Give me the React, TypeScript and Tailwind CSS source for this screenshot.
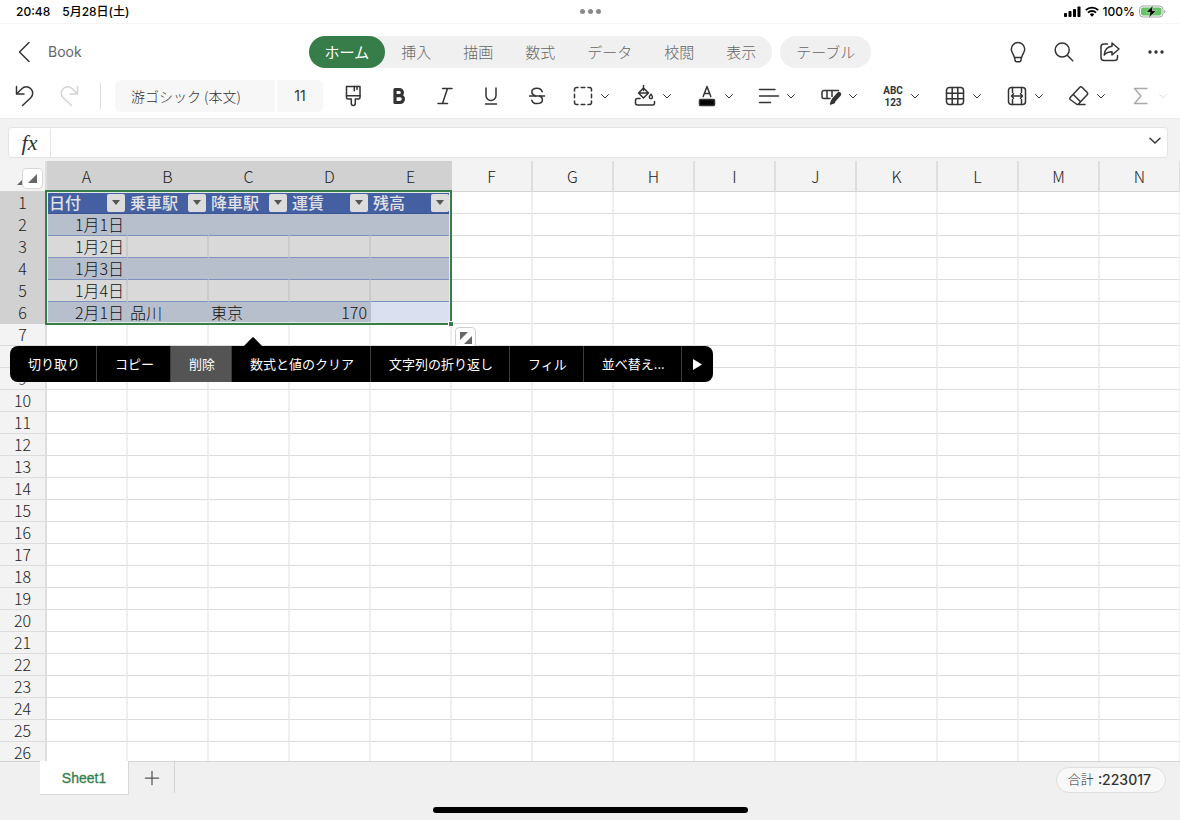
import React from 'react';

type IconProps = { children: React.ReactNode; className?: string };

function Icon({ children, className = 'h-6 w-6' }: IconProps) {
  return (
    <svg
      viewBox="0 0 24 24"
      className={`shrink-0 ${className}`}
      fill="none"
      stroke="currentColor"
      strokeWidth="1.5"
      strokeLinecap="round"
      strokeLinejoin="round"
      aria-hidden="true"
    >
      {children}
    </svg>
  );
}

const ribbonTabs = ['ホーム', '挿入', '描画', '数式', 'データ', '校閲', '表示'];

const formatTools = [
  {
    label: '書式のコピー',
    icon: (
      <>
        <path d="M5.500 2.500h13.500v11a1.500 1.500 0 0 1-1.500 1.500h-3.200v4.500a2 2 0 0 1-4 0V15H7a1.500 1.500 0 0 1-1.500-1.500z" />
        <path d="M5.500 11.700H19M13.300 2.500v4.300M16 2.500v3" />
      </>
    ),
  },
  {
    label: '太字',
    icon: <path strokeWidth="3.200" d="M8 5.500h4.300a3.100 3.100 0 0 1 0 6.200H8zM8 11.700h5a3.400 3.400 0 0 1 0 6.800H8z" />,
  },
  { label: '斜体', icon: <path d="M9.500 4.500H19M5 19.500h9.500M14.500 4.500 9.500 19.500" /> },
  { label: '下線', icon: <path d="M7 4v7.500a5 5 0 0 0 10 0V4M6.500 20h11" /> },
  {
    label: '取り消し線',
    icon: (
      <>
        <path d="M17.200 7.700C16.500 5.500 14.500 4.200 12 4.200c-3 0-5.200 1.600-5.200 3.900 0 1.800 1.300 3 3.700 3.900M6.800 16.200c.6 2 2.600 3.400 5.300 3.400 3.200 0 5.300-1.500 5.300-3.900 0-1.700-1-2.900-2.800-3.700" />
        <path d="M4.500 12h15" />
      </>
    ),
  },
];

const menuTools = [
  {
    label: '罫線',
    icon: (
      <path d="M3.500 7V5.500a2 2 0 0 1 2-2H7M17 3.500h1.500a2 2 0 0 1 2 2V7M20.500 17v1.500a2 2 0 0 1-2 2H17M7 20.500H5.500a2 2 0 0 1-2-2V17M10.200 3.500h3.600M10.200 20.500h3.600M3.500 10.200v3.600M20.500 10.200v3.600" />
    ),
  },
  {
    label: '塗りつぶしの色',
    icon: (
      <>
        <path d="M10.500 1.500v5M5.500 9 10.500 4l5 5-5 5zM5.500 9h10M18 10.200c1 1.400 1.500 2 1.500 2.900a1.600 1.600 0 0 1-3.200 0c0-.9.700-1.500 1.700-2.900z" />
        <path d="M7 14.500H4.500a2 2 0 0 0-2 2V19a2 2 0 0 0 2 2h15a2 2 0 0 0 2-2v-1.500" />
      </>
    ),
  },
  {
    label: 'フォントの色',
    icon: (
      <>
        <path d="M8.200 12.500 12 2.500l3.800 10M9.500 9.500h5" />
        <rect x="4.500" y="15.500" width="15" height="6" rx="1" fill="#000" />
      </>
    ),
  },
  { label: '配置', icon: <path d="M2.500 5.500h15.500M2.500 12h19M2.500 18.500h11" /> },
  {
    label: 'セルのスタイル',
    icon: (
      <>
        <path d="M11 14.500H5a2 2 0 0 1-2-2V8.500a2 2 0 0 1 2-2h14.500M8 6.500v8M13 6.500v6" />
        <path d="M20 10.200 14.800 16" strokeWidth="4.500" />
        <path d="M12.800 16.500 11.500 20l4-1.500z" fill="currentColor" />
      </>
    ),
  },
  {
    label: '表示形式',
    icon: (
      <g
        fill="currentColor"
        stroke="none"
        className="font-[Roboto,sans-serif] text-[10px] font-bold"
        textAnchor="middle"
      >
        <text x="12" y="10">ABC</text>
        <text x="12" y="22">123</text>
      </g>
    ),
  },
  {
    label: '表',
    icon: (
      <>
        <rect x="3.500" y="3.500" width="17" height="17" rx="3" />
        <path d="M3.500 9.200h17M3.500 14.800h17M9.200 3.500v17M14.800 3.500v17" />
      </>
    ),
  },
  {
    label: '挿入と削除',
    icon: (
      <>
        <rect x="3.500" y="3.500" width="17" height="17" rx="3" />
        <path d="M7.500 3.500v5M16.500 3.500v5M7.500 15.500v5M16.500 15.500v5M6.500 12h11M8.500 9.800 6.500 12l2 2.200M15.500 9.800l2 2.200-2 2.200" />
      </>
    ),
  },
  {
    label: 'クリア',
    icon: (
      <path d="m3.200 13.500 9.600-10.200a1.500 1.500 0 0 1 2.200 0l5.200 5.200a1.500 1.500 0 0 1 0 2.200L11.500 20a1.500 1.500 0 0 1-2.200 0l-6.100-4.500a1.500 1.500 0 0 1 0-2zM6.300 10.500l7.200 7.200M10.500 20.500H18" />
    ),
  },
  {
    label: 'オート SUM',
    faded: true,
    icon: <path strokeLinecap="butt" d="M18.500 4.500H5.500L12 12l-6.500 7.500h13" />,
  },
];

const columns = ['A', 'B', 'C', 'D', 'E', 'F', 'G', 'H', 'I', 'J', 'K', 'L', 'M', 'N'];
const tableColumns = 5;
const headings = ['日付', '乗車駅', '降車駅', '運賃', '残高'];
const records = [
  ['1月1日'],
  ['1月2日'],
  ['1月3日'],
  ['1月4日'],
  ['2月1日', '品川', '東京', '170'],
];

const contextItems = [
  '切り取り',
  'コピー',
  '削除',
  '数式と値のクリア',
  '文字列の折り返し',
  'フィル',
  '並べ替え...',
];

function StatusBar() {
  return (
    <div className="grid h-6 shrink-0 grid-cols-[1fr_auto_1fr] items-center border-b border-[#f6f6f6] px-4 font-[Inter,'Noto_Sans_CJK_JP',sans-serif] text-xs font-medium text-black">
      <div className="flex gap-3">
        <span>20:48</span>
        <span>5月28日(土)</span>
      </div>
      <div className="flex gap-[3px]">
        <span className="h-[5px] w-[5px] rounded-full bg-[#8a8a8a]" />
        <span className="h-[5px] w-[5px] rounded-full bg-[#8a8a8a]" />
        <span className="h-[5px] w-[5px] rounded-full bg-[#8a8a8a]" />
      </div>
      <div className="flex items-center justify-end gap-1">
        <svg viewBox="0 0 17 11" className="h-[11px] w-[17px]" aria-hidden="true">
          <rect x="0" y="7" width="3" height="4" rx="0.8" />
          <rect x="4.500" y="5" width="3" height="6" rx="0.8" />
          <rect x="9" y="3" width="3" height="8" rx="0.8" />
          <rect x="13.500" y="0.500" width="3" height="10.500" rx="0.8" />
        </svg>
        <svg viewBox="0 0 14 11" className="h-[11px] w-[14px]" fill="none" stroke="#000" aria-hidden="true">
          <path strokeWidth="1.900" d="M.8 4.200a8.800 8.800 0 0 1 12.400 0M3 6.600a5.700 5.700 0 0 1 8 0" />
          <path fill="#000" stroke="none" d="M4.800 8.400a3.100 3.100 0 0 1 4.400 0L7 10.700z" />
        </svg>
        <span>100%</span>
        <svg viewBox="0 0 27 13" className="-mr-0.5 h-[13px] w-[27px]" aria-hidden="true">
          <rect x="0.500" y="1" width="23.500" height="11" rx="3.500" fill="none" stroke="#a5a5a5" />
          <rect x="2" y="2.500" width="20.500" height="8" rx="2" fill="#65c466" />
          <path d="M25.200 4.800c1.600.6 1.600 2.800 0 3.400z" fill="#a5a5a5" />
          <path d="M14 .5 7.200 7.300h4l-1.500 5.400 7.700-7h-4.200z" stroke="#fff" strokeWidth="0.500" />
        </svg>
      </div>
    </div>
  );
}

function TitleBar() {
  return (
    <header className="grid h-14 shrink-0 grid-cols-[1fr_auto_1fr] items-center text-[15px] text-[#666]">
      <div className="flex items-center pl-3">
        <button aria-label="戻る" className="text-[#333]">
          <Icon>
            <path d="M17 2.500 7.500 12l9.500 9.500" />
          </Icon>
        </button>
        <span className="ml-3 font-[Inter,sans-serif] text-sm">Book</span>
      </div>
      <nav className="flex gap-2 font-light">
        <div className="flex rounded-full bg-[#f0f0f0]">
          {ribbonTabs.map((tab, i) => (
            <button
              key={tab}
              className={`h-8 rounded-full px-4 ${i === 0 ? 'bg-[#377d49] font-normal text-white' : ''}`}
            >
              {tab}
            </button>
          ))}
        </div>
        <button className="h-8 rounded-full bg-[#f0f0f0] px-4">テーブル</button>
      </nav>
      <div className="flex justify-end pr-px text-[#333]">
        <button aria-label="ヒント" className="flex w-[46px] justify-center">
          <Icon>
            <path d="M12 2.500a6.700 6.700 0 0 0-6.700 6.700c0 3 2.200 4.500 3.100 8.300h7.200c.9-3.800 3.100-5.300 3.100-8.300A6.700 6.700 0 0 0 12 2.500zM8.600 17.500l.5 3a1.500 1.500 0 0 0 1.400 1.200h3a1.500 1.500 0 0 0 1.400-1.200l.5-3" />
          </Icon>
        </button>
        <button aria-label="検索" className="flex w-[46px] justify-center">
          <Icon>
            <circle cx="10.200" cy="10" r="7" />
            <path d="m15.200 15.200 5.500 5.500" />
          </Icon>
        </button>
        <button aria-label="共有" className="flex w-[46px] justify-center">
          <Icon>
            <path d="M9.500 4H6a3 3 0 0 0-3 3v10.500a3 3 0 0 0 3 3h10.500a3 3 0 0 0 3-3v-2" />
            <path d="M14 3 21 9l-7 6v-3.300c-3.500 0-6 1-7.800 3.300.5-5 3.300-8.300 7.800-8.700z" />
          </Icon>
        </button>
        <button aria-label="その他" className="flex w-[46px] justify-center">
          <Icon>
            <g fill="currentColor" stroke="none">
              <circle cx="6" cy="12" r="1.700" />
              <circle cx="12" cy="12" r="1.700" />
              <circle cx="18" cy="12" r="1.700" />
            </g>
          </Icon>
        </button>
      </div>
    </header>
  );
}

function Toolbar() {
  return (
    <div className="flex h-[38px] shrink-0 items-start overflow-hidden text-[#333]">
      <div className="flex h-8 shrink-0 items-center">
        <button aria-label="元に戻す" className="flex w-12 justify-center">
          <Icon>
            <path d="M4.500 2.500V10H12M4.500 10l5.300-5.300a6.300 6.300 0 0 1 9 0 6.300 6.300 0 0 1 0 9L10.500 21.500" />
          </Icon>
        </button>
        <button aria-label="やり直し" disabled className="flex w-11 justify-center text-[#d4d4d4]">
          <Icon>
            <path d="M19.500 2.500V10H12M19.500 10l-5.300-5.300a6.300 6.300 0 0 0-9 0 6.300 6.300 0 0 0 0 9l8.300 7.800" />
          </Icon>
        </button>
        <span className="ml-2 h-[26px] w-px bg-[#ddd]" />
        <select
          aria-label="フォント"
          className="ml-3.5 h-8 w-40 appearance-none rounded-l-md bg-[#f7f7f7] pl-4 text-sm font-light"
        >
          <option>游ゴシック (本文)</option>
        </select>
        <select
          aria-label="フォント サイズ"
          className="ml-0.5 h-8 w-[46px] appearance-none rounded-r-md bg-[#f7f7f7] text-center font-[Inter,sans-serif] text-sm"
        >
          <option>11</option>
        </select>
        <div className="ml-[7px] mr-2 flex">
          {formatTools.map((tool) => (
            <button key={tool.label} aria-label={tool.label} className="flex w-[46px] justify-center">
              <Icon>{tool.icon}</Icon>
            </button>
          ))}
        </div>
        {menuTools.map((tool) => (
          <button
            key={tool.label}
            aria-label={tool.label}
            className={`flex w-[62px] items-center gap-1 pl-[3px] ${tool.faded ? 'text-[#aaa]' : ''}`}
          >
            <Icon>{tool.icon}</Icon>
            <Icon className={tool.faded ? 'h-3 w-3 opacity-40' : 'h-3 w-3'}>
              <path strokeWidth="2" d="m5 9 7 7 7-7" />
            </Icon>
          </button>
        ))}
      </div>
    </div>
  );
}

function FormulaBar() {
  return (
    <div className="shrink-0 border-t border-[#e8e8e8] bg-[#f2f2f2] px-2 pt-2 pb-[3px]">
      <div className="mr-1 flex h-[31px] items-center rounded border border-[#e4e4e4] bg-white">
        <label
          htmlFor="formula"
          className="w-[42px] border-r border-[#e4e4e4] text-center font-['Liberation_Serif',serif] text-[22px] leading-7 text-[#333] italic"
        >
          fx
        </label>
        <input id="formula" className="h-full min-w-0 flex-1 px-2 text-sm outline-none" />
        <button aria-label="数式バーを展開" className="mr-1 pb-1 text-[#333]">
          <Icon className="h-4 w-4">
            <path strokeWidth="2.200" d="m4.500 8 7.500 7 7.500-7" />
          </Icon>
        </button>
      </div>
    </div>
  );
}

function bodyCellClass(row: number, col: number) {
  if (row > 6 || col >= tableColumns) return 'border-r-2 border-b border-r-[#efefef] border-b-[#dcdcdc] bg-white';
  if (row === 6 && col === 4) return 'border-r-2 border-b border-[#dae0f0] bg-[#dae0f0]';
  if (row % 2 === 0) return 'border-r-2 border-b border-r-[#b8bfcc] border-b-[#7f92bd] bg-[#b8bfcc]';
  return 'border-r-2 border-b border-r-[#cbcbcb] border-b-[#7f92bd] bg-[#d9d9d9]';
}

function Grid() {
  return (
    <table className="w-[1181px] table-fixed border-separate border-spacing-0 leading-[21px] font-light text-[#111]">
      <colgroup>
        <col className="w-[47px]" />
        {columns.map((c) => (
          <col key={c} className="w-[81px]" />
        ))}
      </colgroup>
      <thead>
        <tr className="h-[31px]">
          <th className="border-r-2 border-b border-r-[#dedede] border-b-[#d4d4d4] bg-[#f3f3f3] p-0">
            <div className="flex items-center justify-end pt-1 pr-0.5">
              <svg viewBox="0 0 5 5" className="mt-2 h-[5px] w-[5px] fill-[#666]" aria-hidden="true">
                <path d="M5 0v5H0z" />
              </svg>
              <button
                aria-label="すべて選択"
                className="flex h-[21px] w-[21px] items-center justify-center rounded border border-[#d8d8d8] bg-white"
              >
                <svg viewBox="0 0 9 9" className="h-[9px] w-[9px] fill-[#666]" aria-hidden="true">
                  <path d="M9 0v9H0z" />
                </svg>
              </button>
            </div>
          </th>
          {columns.map((c, i) => (
            <th
              key={c}
              scope="col"
              className={`border-r-2 border-b p-0 font-light text-[#222] ${
                i < tableColumns ? 'border-[#d1d1d1] bg-[#d1d1d1]' : 'border-r-[#dedede] border-b-[#d4d4d4] bg-[#f3f3f3]'
              }`}
            >
              {c}
            </th>
          ))}
        </tr>
      </thead>
      <tbody>
        {Array.from({ length: 26 }, (_, i) => i + 1).map((row) => (
          <tr key={row} className="h-[22px]">
            <th
              scope="row"
              className={`border-r-2 border-b p-0 font-light text-[#222] ${
                row <= 6 ? 'border-[#d1d1d1] bg-[#d1d1d1]' : 'border-r-[#dedede] border-b-[#dcdcdc] bg-[#f3f3f3]'
              }`}
            >
              {row}
            </th>
            {columns.map((c, col) =>
              row === 1 && col < tableColumns ? (
                <td key={c} className="border-b border-[#3c5694] bg-[#4460a3] p-0 font-medium text-[#e2e2e2]">
                  <div className="flex h-[21px] items-center justify-between pr-[3px] pl-0.5">
                    <span className="whitespace-nowrap">{headings[col]}</span>
                    <button
                      aria-label={`${headings[col]}のフィルター`}
                      className="flex h-[18px] w-[18px] items-center justify-center rounded-xs bg-[#dcdcdc]"
                    >
                      <svg viewBox="0 0 8 5" className="h-[5px] w-2 fill-[#555]" aria-hidden="true">
                        <path d="M0 0h8L4 5z" />
                      </svg>
                    </button>
                  </div>
                </td>
              ) : (
                <td
                  key={c}
                  className={`p-0 whitespace-nowrap ${bodyCellClass(row, col)} ${
                    col === 0 || col === 3 ? 'pr-0.5 text-right' : 'pl-0.5'
                  }`}
                >
                  {records[row - 2]?.[col]}
                </td>
              ),
            )}
          </tr>
        ))}
      </tbody>
    </table>
  );
}

function ContextMenu() {
  return (
    <div className="absolute top-[185px] left-2.5">
      <svg viewBox="0 0 20 10" className="absolute -top-[9px] left-[233px] h-2.5 w-5" aria-hidden="true">
        <path d="M0 10 8.500 1.200a2 2 0 0 1 3 0L20 10z" />
      </svg>
      <div role="menu" className="flex h-9 overflow-hidden rounded-lg bg-black text-[13px] text-white">
        {contextItems.map((item) => (
          <button
            key={item}
            role="menuitem"
            className={`border-r border-[#3c3c3c] pr-4 pl-[18px] whitespace-nowrap ${
              item === '削除' ? 'bg-[#545454]' : ''
            }`}
          >
            {item}
          </button>
        ))}
        <button role="menuitem" aria-label="次へ" className="flex w-[31px] items-center justify-center">
          <svg viewBox="0 0 9 11" className="h-[11px] w-[9px] fill-white" aria-hidden="true">
            <path d="M0 0v11l9-5.500z" />
          </svg>
        </button>
      </div>
    </div>
  );
}

function Sheet() {
  return (
    <main className="relative min-h-0 flex-1 overflow-hidden bg-white">
      <Grid />
      <div className="pointer-events-none absolute top-[29px] left-[45px] h-[135px] w-[407px] border-2 border-[#377d49] shadow-[inset_0_0_0_1px_#e4ebe6]">
        <span className="absolute -right-[3px] -bottom-[3px] h-1 w-1 bg-[#377d49] ring-1 ring-white" />
      </div>
      <button
        aria-label="選択範囲の拡張"
        className="absolute top-[166px] left-[455px] flex h-[21px] w-[21px] items-center justify-center rounded border border-[#d0d0d0] bg-white"
      >
        <svg viewBox="0 0 12 12" className="h-3 w-3 fill-[#666]" aria-hidden="true">
          <path d="M0 0h8L0 8zM12 4v8H4z" />
        </svg>
      </button>
      <ContextMenu />
    </main>
  );
}

function Footer() {
  return (
    <footer className="flex h-[59px] shrink-0 flex-col justify-between bg-[#f0f0f0]">
      <div className="flex items-start">
        <div className="w-10 border-t border-[#d4d4d4]" />
        <button className="h-[34px] w-[89px] border-r border-b border-[#d8d8d8] bg-white font-['Liberation_Sans',sans-serif] text-sm font-medium text-[#377d49] [-webkit-text-stroke:0.3px]">
          Sheet1
        </button>
        <div className="flex h-8 flex-1 border-t border-[#d4d4d4]">
          <button
            aria-label="シートの追加"
            className="flex w-[46px] items-center justify-center border-r border-[#d4d4d4] text-[#555]"
          >
            <Icon className="h-5 w-5">
              <path d="M12 4v16M4 12h16" />
            </Icon>
          </button>
          <div className="mt-[5px] mr-3.5 ml-auto flex h-[26px] items-center gap-1 rounded-full border border-[#dedede] bg-[#f8f8f8] pr-3.5 pl-[11px] font-[Inter,'Noto_Sans_CJK_JP',sans-serif] text-[13px] text-[#333]">
            <span className="font-light">合計</span>
            <span className="text-sm font-medium">:223017</span>
          </div>
        </div>
      </div>
      <div className="mx-auto mb-[7px] h-1.5 w-[315px] rounded-full bg-black" />
    </footer>
  );
}

export default function App() {
  return (
    <div className="flex h-screen flex-col overflow-hidden bg-white font-['Noto_Sans_CJK_JP',sans-serif]">
      <StatusBar />
      <TitleBar />
      <Toolbar />
      <FormulaBar />
      <Sheet />
      <Footer />
    </div>
  );
}
